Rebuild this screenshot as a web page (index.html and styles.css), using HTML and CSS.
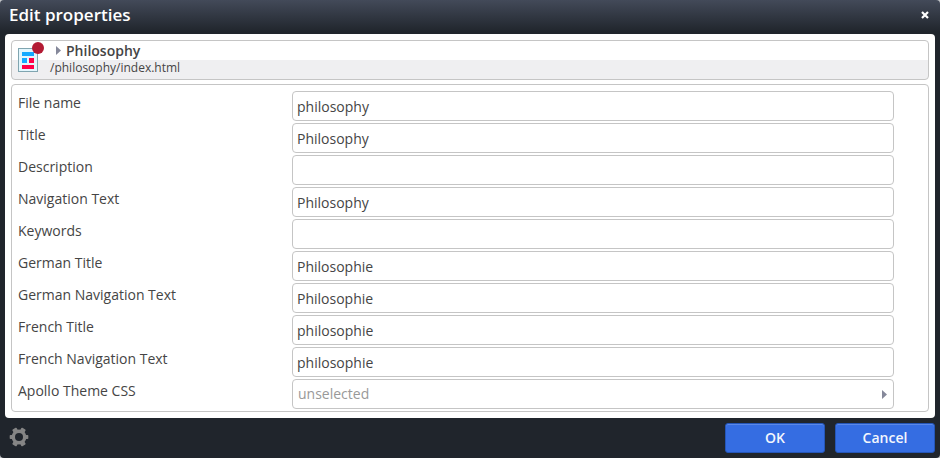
FILE: index.html
```html
<!DOCTYPE html>
<html lang="en">
<head>
<meta charset="utf-8">
<title>Edit properties</title>
<link rel="stylesheet" href="styles.css">
</head>
<body>
<div class="dialog">
  <header class="titlebar">
    <span class="title">Edit properties</span>
    <svg class="close" width="8" height="8" viewBox="0 0 8 8"><path d="M1 1L7 7M7 1L1 7" stroke="#fff" stroke-width="2.2"/></svg>
  </header>
  <main class="content">
    <section class="resource">
      <svg class="page-icon" width="28" height="32" viewBox="0 0 28 32">
        <rect x=".5" y="7.500" width="19" height="23" fill="#e3f6fd" stroke="#80a5b0"/>
        <path d="M4 11h12v4H4zM4 17h5v5H4z" fill="#14a9ff"/>
        <path d="M11 17h5v5h-5zM4 24h12v4H4z" fill="#ff0048"/>
        <circle cx="20" cy="7" r="6" fill="#b31b34"/>
      </svg>
      <div class="resource-text">
        <div class="resource-title"><svg class="arrow" width="5" height="9" viewBox="0 0 5 9"><path d="M0 0L5 4.500L0 9z" fill="#85889a"/></svg><span>Philosophy</span></div>
        <div class="path">/philosophy/index.html</div>
      </div>
    </section>
    <section class="form">
      <div class="row"><label>File name</label><div class="field">philosophy</div></div>
      <div class="row"><label>Title</label><div class="field">Philosophy</div></div>
      <div class="row"><label>Description</label><div class="field"></div></div>
      <div class="row"><label>Navigation Text</label><div class="field">Philosophy</div></div>
      <div class="row"><label>Keywords</label><div class="field"></div></div>
      <div class="row"><label>German Title</label><div class="field">Philosophie</div></div>
      <div class="row"><label>German Navigation Text</label><div class="field">Philosophie</div></div>
      <div class="row"><label>French Title</label><div class="field">philosophie</div></div>
      <div class="row"><label>French Navigation Text</label><div class="field">philosophie</div></div>
      <div class="row"><label>Apollo Theme CSS</label><div class="field select"><span>unselected</span><svg width="5" height="9" viewBox="0 0 5 9"><path d="M0 0L5 4.500L0 9z" fill="#85889a"/></svg></div></div>
    </section>
  </main>
  <footer class="footer">
    <svg class="gear" width="20" height="20" viewBox="-10 -10 20 20">
      <g fill="#858585">
        <rect x="-9.300" y="-2" width="18.600" height="4" rx=".8"/>
        <rect x="-9.700" y="-2.400" width="19.400" height="4.800" rx=".8" transform="rotate(60)"/>
        <rect x="-9.700" y="-2.400" width="19.400" height="4.800" rx=".8" transform="rotate(120)"/>
        <circle r="7.400"/>
      </g>
      <circle r="4" fill="#20252c"/>
    </svg>
    <div class="button">OK</div>
    <div class="button">Cancel</div>
  </footer>
</div>
</body>
</html>
```
FILE: styles.css
```css
* { box-sizing: border-box; }
body {
  margin: 0;
  background: #c4c6c9;
  font-family: "Open Sans", sans-serif;
  font-size: 14px;
  color: #454545;
}
.dialog {
  width: 940px;
  height: 458px;
  padding: 0 5px;
  border-radius: 4px;
  background: linear-gradient(#434a59 0, #20252c 32px, #20252c 100%);
  display: flex;
  flex-direction: column;
}
.titlebar {
  height: 34px;
  padding: 0 6px 4px 4px;
  display: flex;
  align-items: center;
  justify-content: space-between;
  color: #fff;
}
.title { font-size: 17px; line-height: 24px; font-weight: 600; }
.content {
  height: 384px;
  padding: 6px;
  background: #fff;
  border-radius: 4px;
}
.resource {
  height: 40px;
  display: flex;
  border: 1px solid #c5c5c5;
  border-radius: 4px;
  background: linear-gradient(#fff 19px, #efeff1 19px);
}
.page-icon { margin: 0 0 0 6px; }
.resource-text { margin-left: 4px; }
.resource-title {
  height: 19px;
  line-height: 19px;
  padding-left: 6px;
  font-weight: 600;
  display: flex;
  align-items: center;
  gap: 5px;
}
.path { font-size: 12px; line-height: 16px; }
.form {
  height: 328px;
  margin-top: 4px;
  padding: 6px 34px 0 6px;
  border: 1px solid #c5c5c5;
  border-radius: 4px;
}
.row {
  height: 32px;
  display: grid;
  grid-template-columns: 274px 602px;
}
.row label { line-height: 24px; }
.field {
  height: 30px;
  padding: 0 4px;
  line-height: 29px;
  border: 1px solid #c5c5c5;
  border-radius: 4px;
}
.select {
  padding: 0 6px 0 5px;
  line-height: 27px;
  display: flex;
  align-items: center;
  justify-content: space-between;
  color: #999;
}
.select span { margin-bottom: 2px; }
.footer {
  height: 40px;
  display: flex;
  align-items: center;
  gap: 10px;
}
.gear { margin: -2px auto 0 4px; }
.button {
  width: 100px;
  height: 30px;
  border: 1px solid #2556b8;
  border-radius: 3px;
  background: #356de2;
  box-shadow: inset 0 1px #5a88e8;
  color: #f3f6fd;
  font-weight: 600;
  line-height: 28px;
  text-align: center;
}
```
